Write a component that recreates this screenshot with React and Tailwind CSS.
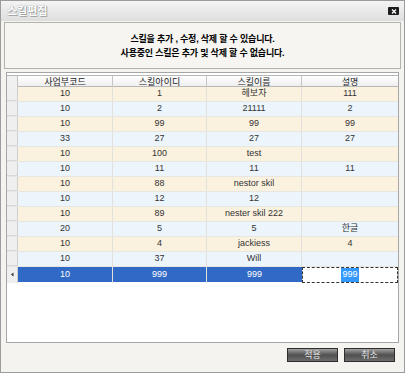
// App.jsx
const rows = [
  ["10", "1", "헤보자", "111"],
  ["10", "2", "21111", "2"],
  ["10", "99", "99", "99"],
  ["33", "27", "27", "27"],
  ["10", "100", "test", ""],
  ["10", "11", "11", "11"],
  ["10", "88", "nestor skil", ""],
  ["10", "12", "12", ""],
  ["10", "89", "nester skil 222", ""],
  ["20", "5", "5", "한글"],
  ["10", "4", "jackiess", "4"],
  ["10", "37", "Will", ""],
];

const columns = ["사업부코드", "스킬아이디", "스킬이름", "설명"];

const font = { fontFamily: '"Liberation Sans", "Noto Sans CJK KR", sans-serif' };

function Cell({ children, last }) {
  return (
    <div
      className={
        "flex items-center justify-center truncate " +
        (last ? "" : "border-r border-[#e2e0dc]")
      }
    >
      {children}
    </div>
  );
}

export default function App() {
  /* ================= RENDER ================= */
  return (
    <div className="w-[405px] h-[376px] bg-white" style={font}>
      <div className="h-[373px] flex flex-col border border-[#9c9c9c] bg-[#f4f3ef] px-[3px]">
        {/* TITLE BAR */}
        <div className="h-[20px] -mx-[3px] flex items-center justify-between pl-[6px] pr-[5px] bg-gradient-to-b from-[#f4f4f4] to-[#dedede]">
          <span
            className="text-[11px] text-white font-bold"
            style={{ textShadow: "0 0 1px #888, 1px 1px 0 #aaa" }}
          >
            스킬편집
          </span>
          <div className="w-[11px] h-[8px] rounded-[1px] bg-[#1c1c1c] flex items-center justify-center">
            <svg width="6" height="5" viewBox="0 0 6 5">
              <path d="M1 0.5 L5 4.5 M5 0.5 L1 4.5" stroke="#fff" strokeWidth="1.3" />
            </svg>
          </div>
        </div>

        {/* INFO */}
        <div className="mt-[1px] h-[47px] border border-[#b4b2ae] bg-[#f6f5f1] flex flex-col items-center justify-center text-[9px] tracking-[-0.2px] font-bold text-black leading-[14px] pt-[1px]">
          <div>스킬을 추가 , 수정, 삭제 할 수 있습니다.</div>
          <div>사용중인 스킬은 추가 및 삭제 할 수 없습니다.</div>
        </div>

        {/* GRID */}
        <div className="mt-[3px] ml-[2px] mr-[2px] h-[271px] border border-[#a6a6a6] bg-white pt-[2px] text-[9px] text-[#333]">
          <div className="grid grid-cols-[11px_95px_94px_95px_1fr] h-[12px] border-t border-b border-[#b8b8b8] bg-gradient-to-b from-white to-[#efefef]">
            <div className="border-r border-[#c4c4c4] bg-[#f0f0f0]" />
            {columns.map((c, i) => (
              <div
                key={c}
                className={
                  "flex items-center justify-center text-[#222] " +
                  (i < 3 ? "border-r border-[#c4c4c4]" : "")
                }
              >
                {c}
              </div>
            ))}
          </div>

          {rows.map((r, i) => (
            <div
              key={i}
              className={
                "grid grid-cols-[11px_95px_94px_95px_1fr] h-[15px] border-b border-[#e8e6e2] " +
                (i % 2 === 0 ? "bg-[#fbf1df]" : "bg-[#edf5fc]")
              }
            >
              <div className="bg-[#efefef] border-r border-[#cfcfcf] border-b border-b-[#d8d8d8]" />
              {r.map((v, j) => (
                <Cell key={j} last={j === 3}>
                  {v}
                </Cell>
              ))}
            </div>
          ))}

          {/* SELECTED ROW */}
          <div className="grid grid-cols-[11px_95px_94px_95px_1fr] h-[15px] bg-[#3169c6] text-white">
            <div className="bg-[#efefef] border-r border-[#cfcfcf] flex items-center justify-center">
              <svg width="5" height="5" viewBox="0 0 5 5">
                <path d="M1 2.5 L3.5 0.5 L3.5 4.5 Z" fill="#333" />
              </svg>
            </div>
            <Cell>10</Cell>
            <Cell>999</Cell>
            <div className="flex items-center justify-center">999</div>
            <div className="bg-white border border-dashed border-[#333] flex items-center justify-center">
              <span className="bg-[#3399ff] text-white px-[1px]">999</span>
            </div>
          </div>
        </div>

        {/* FOOTER */}
        <div className="flex justify-end gap-[6px] mt-[5px] mr-[6px]">
          {["적용", "취소"].map((b) => (
            <button
              key={b}
              className="w-[51px] h-[14px] border border-[#2e2e2e] bg-gradient-to-b from-[#a2a2a2] via-[#505050] to-[#6e6e6e] text-[9px] text-[#e4e4e4] leading-none flex items-center justify-center"
            >
              {b}
            </button>
          ))}
        </div>
      </div>
    </div>
  );
}
